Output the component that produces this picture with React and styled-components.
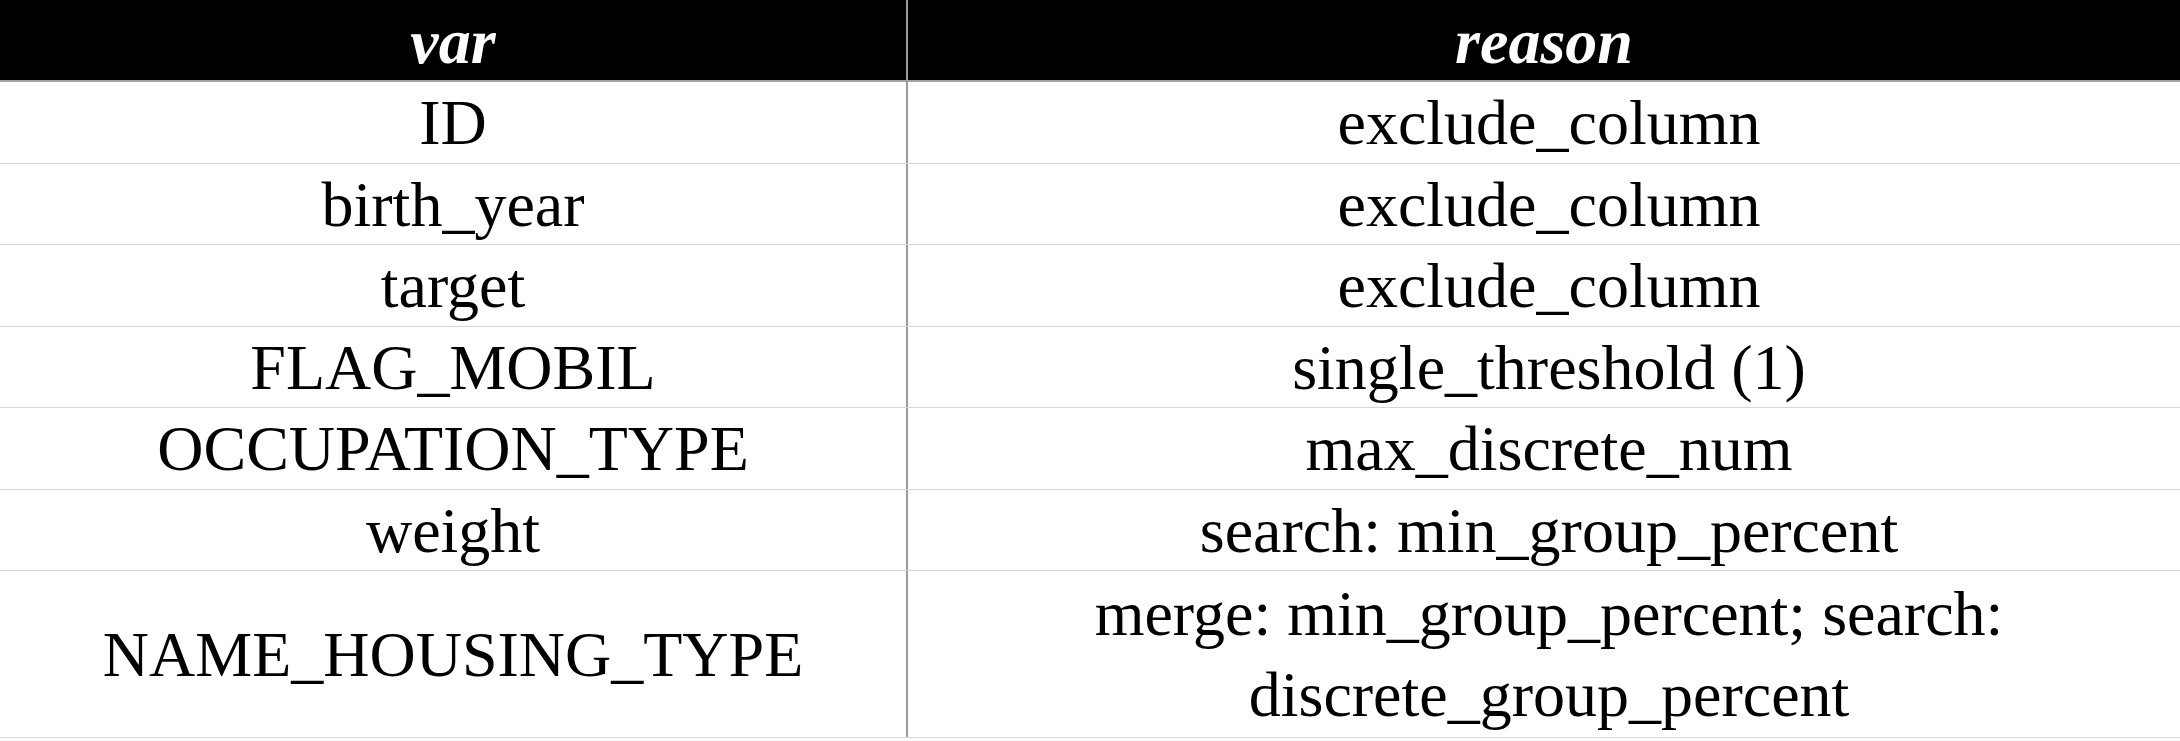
import styled, { createGlobalStyle } from "styled-components";

const rows = [
  { name: "ID", reason: "exclude_column" },
  { name: "birth_year", reason: "exclude_column" },
  { name: "target", reason: "exclude_column" },
  { name: "FLAG_MOBIL", reason: "single_threshold (1)" },
  { name: "OCCUPATION_TYPE", reason: "max_discrete_num" },
  { name: "weight", reason: "search: min_group_percent" },
  {
    name: "NAME_HOUSING_TYPE",
    reason: "merge: min_group_percent; search: discrete_group_percent",
    tall: true,
  },
];

function App() {
  return (
    <>
      <GlobalStyle />
      <Table>
        <HeadRow>
          <HeadCell $first>var</HeadCell>
          <HeadCell>reason</HeadCell>
        </HeadRow>
        {rows.map((row) => (
          <Row key={row.name}>
            <Cell $first $tall={row.tall}>
              {row.name}
            </Cell>
            <Cell $tall={row.tall}>{row.reason}</Cell>
          </Row>
        ))}
      </Table>
    </>
  );
}

export default App;

const GlobalStyle = createGlobalStyle`
  html, body {
    margin: 0;
    padding: 0;
    background: #ffffff;
  }
  body {
    font-family: "Liberation Serif", "Times New Roman", serif;
  }
`;

const Table = styled.div`
  width: 2180px;
  display: flex;
  flex-direction: column;
`;

const HeadRow = styled.div`
  display: grid;
  grid-template-columns: 908px 1fr;
  background: #000000;
  border-bottom: 2px solid #a3a3a3;
`;

const HeadCell = styled.div`
  height: 77px;
  padding-top: 3px;
  line-height: 77px;
  text-align: center;
  color: #ffffff;
  font-size: 64px;
  font-weight: bold;
  font-style: italic;
  border-right: ${(p) => (p.$first ? "2px solid #9c9c9c" : "none")};
`;

const Row = styled.div`
  display: grid;
  grid-template-columns: 908px 1fr;
  border-bottom: 1px solid #d6d6d6;
`;

const Cell = styled.div`
  display: flex;
  align-items: center;
  justify-content: center;
  text-align: center;
  color: #000000;
  font-size: 64px;
  line-height: ${(p) => (p.$tall ? "81.3px" : "78.5px")};
  padding: ${(p) =>
    p.$tall ? "2px 40px 1px" : "2px 40px 0"};
  padding-left: ${(p) => (p.$first ? "40px" : "50px")};
  border-right: ${(p) => (p.$first ? "2px solid #9c9c9c" : "none")};
`;
